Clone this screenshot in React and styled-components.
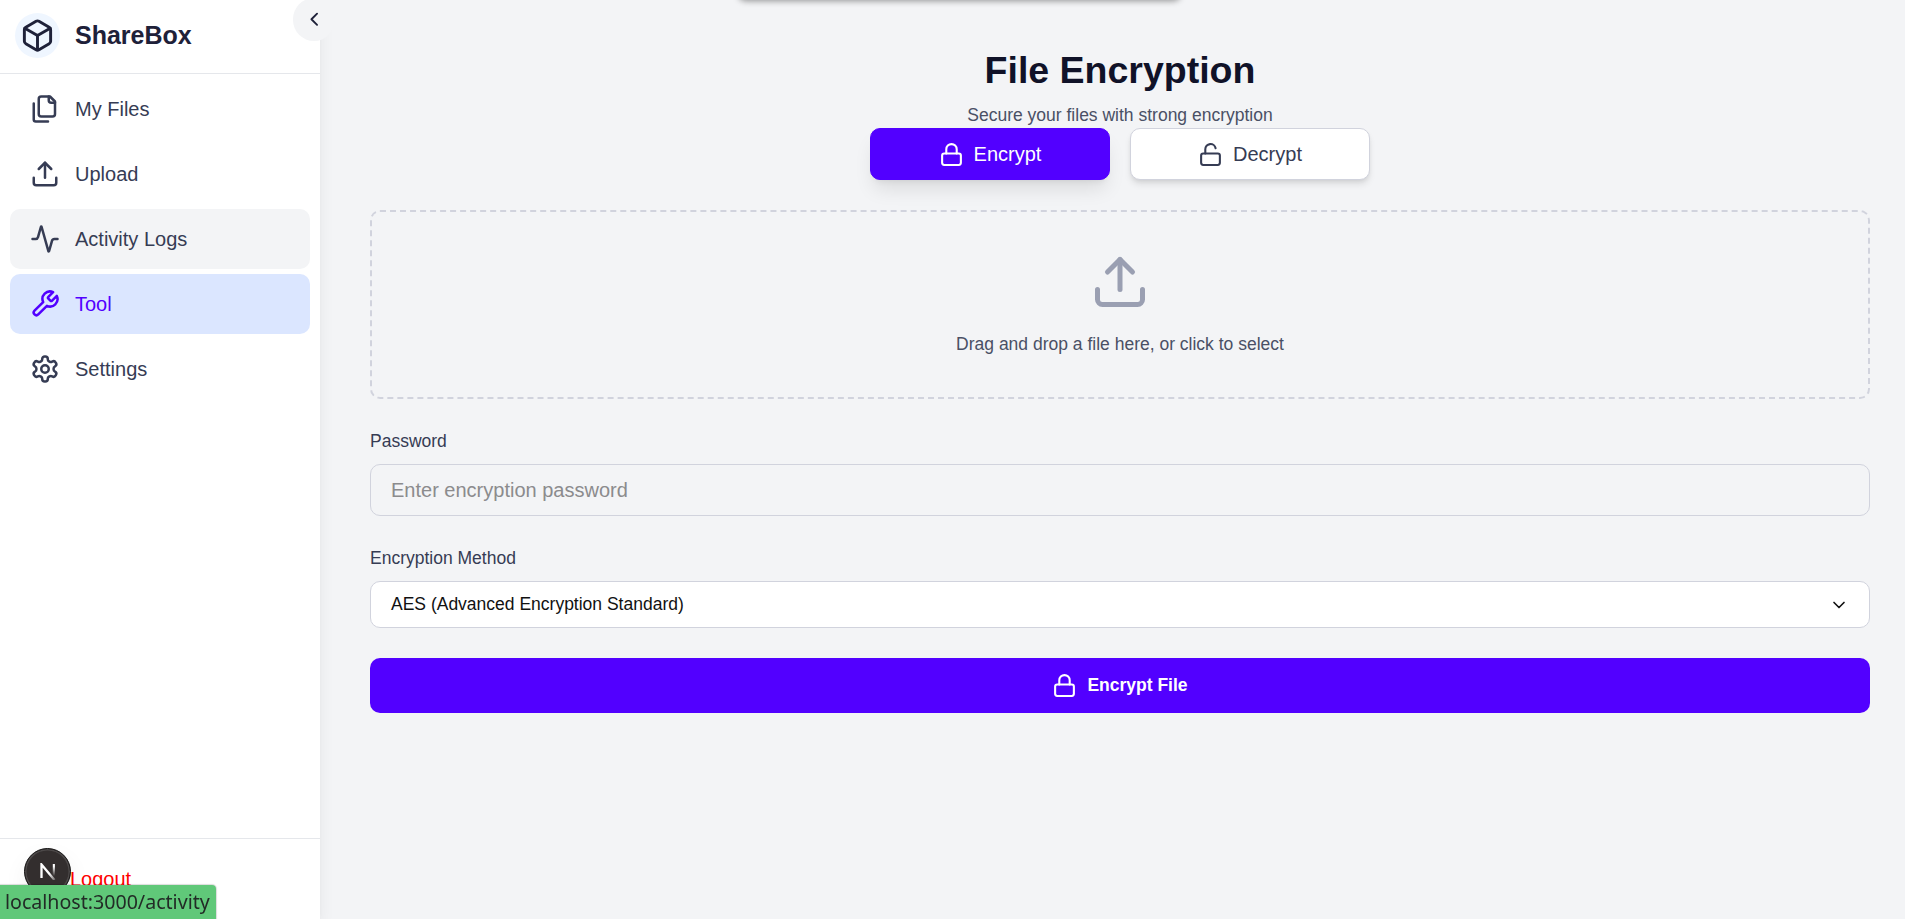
import React from 'react';
import styled, { createGlobalStyle, css } from 'styled-components';
import { Activity, Box, ChevronDown, ChevronLeft, Lock, LockOpen, LogOut, Upload } from 'lucide-react';

const GlobalStyle = createGlobalStyle`
  *, *::before, *::after { box-sizing: border-box; }
  body {
    margin: 0;
    background: #f3f4f6;
    font-family: "Liberation Sans", Arial, sans-serif;
    overflow: hidden;
  }
  button, input { font: inherit; }
  svg { flex: none; display: block; }
`;

const Page = styled.div`
  display: flex;
  height: 100vh;
  background: #f3f4f6;
`;

const Sidebar = styled.aside`
  position: relative;
  display: flex;
  flex-direction: column;
  flex: none;
  width: 320px;
  background: #fff;
  box-shadow: 0 12.5px 18.75px -3.75px rgba(0, 0, 0, 0.1), 0 5px 7.5px -5px rgba(0, 0, 0, 0.1);
`;

const Brand = styled.header`
  display: flex;
  align-items: center;
  gap: 15px;
  height: 74px;
  padding: 0 15px 3px;
  border-bottom: 1px solid #e5e7eb;
  color: #1e2139;
`;

const BrandMark = styled.span`
  display: grid;
  place-items: center;
  width: 45px;
  height: 45px;
  border-radius: 50%;
  background: #eff6ff;
`;

const BrandName = styled.span`
  font-size: 25px;
  font-weight: 700;
  line-height: 35px;
`;

const CollapseButton = styled.button`
  position: absolute;
  top: -2px;
  right: -15px;
  display: grid;
  place-items: center;
  width: 42.5px;
  height: 42.5px;
  padding: 0 0 1px;
  border: 0;
  border-radius: 50%;
  background: #f3f4f6;
  color: #1e2139;
`;

const Nav = styled.nav`
  display: flex;
  flex: 1;
  flex-direction: column;
  gap: 5px;
  padding: 5px 10px;
`;

const NavItem = styled.a`
  display: flex;
  align-items: center;
  gap: 15px;
  height: 60px;
  padding: 0 20px;
  border-radius: 10px;
  color: #363c54;
  font-size: 20px;
  line-height: 30px;
  ${({ $state }) => $state === 'hovered' && css`background: #f3f4f6;`}
  ${({ $state }) => $state === 'active' && css`background: #dbe6ff; color: #5200ff;`}
`;

const NavGlyph = styled.svg`
  width: 30px;
  height: 30px;
  fill: none;
  stroke: currentColor;
  stroke-width: 2;
  stroke-linecap: round;
  stroke-linejoin: round;
`;

const SidebarFooter = styled.footer`
  height: 81px;
  padding: 10px;
  border-top: 1px solid #e5e7eb;
`;

const LogoutLink = styled.a`
  display: flex;
  align-items: center;
  gap: 10px;
  height: 60px;
  padding: 0 20px;
  color: #ff0000;
  font-size: 20px;
`;

const DevBadge = styled.div`
  position: fixed;
  left: 24px;
  bottom: 24px;
  display: grid;
  place-items: center;
  width: 47px;
  height: 47px;
  border: 1px solid #161414;
  border-radius: 50%;
  background: #332e2e;
  box-shadow: inset 0 0 0 1.5px #4d4949, 0 10px 24px rgba(0, 0, 0, 0.06);
`;

const StatusBar = styled.div`
  position: fixed;
  left: 0;
  bottom: 0;
  width: 216px;
  height: 34px;
  padding-left: 5px;
  border-top-right-radius: 4px;
  background: #60c879;
  box-shadow: 0 0 1px 1px rgba(0, 0, 0, 0.14);
  color: #222b26;
  font-family: "Noto Sans", sans-serif;
  font-size: 19.6px;
  line-height: 34px;
  white-space: nowrap;
`;

const Toast = styled.div`
  position: fixed;
  left: 738px;
  bottom: 100%;
  width: 443px;
  height: 60px;
  border-radius: 8px;
  box-shadow: 0 1px 6px 0 rgba(0, 0, 0, 0.4);
`;

const Main = styled.main`
  flex: 1;
  padding: 48px 35px 0 50px;
`;

const Heading = styled.header`
  text-align: center;
`;

const Title = styled.h1`
  margin: 0;
  color: #101228;
  font-size: 37.5px;
  font-weight: 700;
  line-height: 45px;
`;

const Subtitle = styled.p`
  margin: 10px 0 0;
  color: #4a5065;
  font-size: 17.5px;
  line-height: 25px;
`;

const ModeSwitch = styled.div`
  display: flex;
  justify-content: center;
  gap: 20px;
`;

const ModeButton = styled.button`
  display: flex;
  align-items: center;
  justify-content: center;
  gap: 10px;
  width: 240px;
  height: 52px;
  padding: 0;
  border: 1px solid ${({ $active }) => ($active ? '#5200ff' : '#d1d3dd')};
  border-radius: 10px;
  background: ${({ $active }) => ($active ? '#5200ff' : '#fff')};
  color: ${({ $active }) => ($active ? '#fff' : '#363c54')};
  font-size: 20px;
  box-shadow: ${({ $active }) => ($active
    ? '0 12.5px 18.75px -3.75px rgba(0,0,0,.1), 0 5px 7.5px -5px rgba(0,0,0,.1)'
    : '0 5px 7.5px -1.25px rgba(0,0,0,.1), 0 2.5px 5px -2.5px rgba(0,0,0,.1)')};
`;

const DropZone = styled.div`
  display: flex;
  flex-direction: column;
  align-items: center;
  gap: 20px;
  height: 189px;
  margin-top: 30px;
  padding-top: 40px;
  border: 2px dashed #d1d3dd;
  border-radius: 10px;
  color: #9a9fb2;
`;

const DropHint = styled.p`
  margin: 0;
  color: #4a5065;
  font-size: 17.5px;
  line-height: 25px;
`;

const Field = styled.div`
  display: flex;
  flex-direction: column;
  gap: 10px;
  margin-top: 30px;
`;

const Label = styled.label`
  color: #363c54;
  font-size: 17.5px;
  line-height: 25px;
`;

const PasswordInput = styled.input`
  height: 52px;
  padding: 0 20px;
  border: 1px solid #d1d3dd;
  border-radius: 10px;
  background: transparent;
  font-size: 20px;
  &::placeholder { color: #8b8b8d; opacity: 1; }
`;

const SelectBox = styled.div`
  display: flex;
  align-items: center;
  justify-content: space-between;
  height: 47px;
  padding: 0 20px;
  border: 1px solid #d1d3dd;
  border-radius: 10px;
  background: #fff;
  color: #111;
  font-size: 17.5px;
`;

const SubmitButton = styled.button`
  display: flex;
  align-items: center;
  justify-content: center;
  gap: 10px;
  width: 100%;
  height: 55px;
  margin-top: 30px;
  border: 0;
  border-radius: 10px;
  background: #5200ff;
  color: #fff;
  font-size: 17.5px;
  font-weight: 700;
`;

function FilesIcon() {
  return (
    <NavGlyph viewBox="0 0 24 24">
      <path d="M20 7h-3a2 2 0 0 1-2-2V2" />
      <path d="M9 18a2 2 0 0 1-2-2V4a2 2 0 0 1 2-2h7l4 4v10a2 2 0 0 1-2 2Z" />
      <path d="M3 7.6v12.8A1.6 1.6 0 0 0 4.6 22h9.8" />
    </NavGlyph>
  );
}

function WrenchIcon() {
  return (
    <NavGlyph viewBox="0 0 24 24">
      <path d="M14.7 6.3a1 1 0 0 0 0 1.4l1.6 1.6a1 1 0 0 0 1.4 0l3.77-3.77a6 6 0 0 1-7.94 7.94l-6.91 6.91a2.12 2.12 0 0 1-3-3l6.91-6.91a6 6 0 0 1 7.94-7.94l-3.76 3.76z" />
    </NavGlyph>
  );
}

function GearIcon() {
  return (
    <NavGlyph viewBox="0 0 24 24">
      <path d="M12.22 2h-.44a2 2 0 0 0-2 2v.18a2 2 0 0 1-1 1.73l-.43.25a2 2 0 0 1-2 0l-.15-.08a2 2 0 0 0-2.73.73l-.22.38a2 2 0 0 0 .73 2.73l.15.1a2 2 0 0 1 1 1.72v.51a2 2 0 0 1-1 1.74l-.15.09a2 2 0 0 0-.73 2.73l.22.38a2 2 0 0 0 2.73.73l.15-.08a2 2 0 0 1 2 0l.43.25a2 2 0 0 1 1 1.73V20a2 2 0 0 0 2 2h.44a2 2 0 0 0 2-2v-.18a2 2 0 0 1 1-1.73l.43-.25a2 2 0 0 1 2 0l.15.08a2 2 0 0 0 2.73-.73l.22-.39a2 2 0 0 0-.73-2.73l-.15-.08a2 2 0 0 1-1-1.74v-.5a2 2 0 0 1 1-1.74l.15-.09a2 2 0 0 0 .73-2.73l-.22-.38a2 2 0 0 0-2.73-.73l-.15.08a2 2 0 0 1-2 0l-.43-.25a2 2 0 0 1-1-1.73V4a2 2 0 0 0-2-2z" />
      <circle cx="12" cy="12" r="3" />
    </NavGlyph>
  );
}

const NAV_ITEMS = [
  { label: 'My Files', icon: FilesIcon },
  { label: 'Upload', icon: Upload },
  { label: 'Activity Logs', icon: Activity, state: 'hovered' },
  { label: 'Tool', icon: WrenchIcon, state: 'active' },
  { label: 'Settings', icon: GearIcon },
];

function NextMark() {
  return (
    <svg width="16" height="17" viewBox="0 0 16 17" fill="none">
      <defs>
        <linearGradient id="stem" x1="0" y1="0" x2="0" y2="1">
          <stop offset="0.2" stopColor="#fff" />
          <stop offset="1" stopColor="#fff" stopOpacity="0" />
        </linearGradient>
        <linearGradient id="slash" x1="0" y1="0" x2="1" y2="1">
          <stop offset="0.6" stopColor="#fff" />
          <stop offset="1" stopColor="#fff" stopOpacity="0.3" />
        </linearGradient>
      </defs>
      <path d="M1.5 15V1.5L14.5 17" stroke="url(#slash)" strokeWidth="2.3" />
      <rect x="12.8" y="1" width="2.1" height="12" fill="url(#stem)" />
    </svg>
  );
}

export default function App() {
  return (
    <>
      <GlobalStyle />
      <Page>
        <Sidebar>
          <Brand>
            <BrandMark><Box size={35} /></BrandMark>
            <BrandName>ShareBox</BrandName>
          </Brand>
          <CollapseButton aria-label="Collapse sidebar"><ChevronLeft size={22.5} /></CollapseButton>
          <Nav>
            {NAV_ITEMS.map(({ label, icon: Icon, state }) => (
              <NavItem key={label} $state={state}>
                <Icon size={30} />
                {label}
              </NavItem>
            ))}
          </Nav>
          <SidebarFooter>
            <LogoutLink><LogOut size={30} />Logout</LogoutLink>
          </SidebarFooter>
        </Sidebar>
        <Main>
          <Heading>
            <Title>File Encryption</Title>
            <Subtitle>Secure your files with strong encryption</Subtitle>
          </Heading>
          <ModeSwitch>
            <ModeButton $active><Lock size={25} />Encrypt</ModeButton>
            <ModeButton><LockOpen size={25} />Decrypt</ModeButton>
          </ModeSwitch>
          <DropZone>
            <Upload size={60} />
            <DropHint>Drag and drop a file here, or click to select</DropHint>
          </DropZone>
          <Field>
            <Label htmlFor="password">Password</Label>
            <PasswordInput id="password" type="password" placeholder="Enter encryption password" />
          </Field>
          <Field>
            <Label>Encryption Method</Label>
            <SelectBox>
              AES (Advanced Encryption Standard)
              <ChevronDown size={20} />
            </SelectBox>
          </Field>
          <SubmitButton><Lock size={25} />Encrypt File</SubmitButton>
        </Main>
      </Page>
      <Toast />
      <DevBadge><NextMark /></DevBadge>
      <StatusBar>localhost:3000/activity</StatusBar>
    </>
  );
}
